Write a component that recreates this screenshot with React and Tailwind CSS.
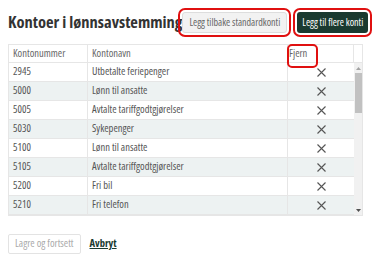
import React from 'react';

const rows = [
  { nr: '2945', navn: 'Utbetalte feriepenger' },
  { nr: '5000', navn: 'Lønn til ansatte' },
  { nr: '5005', navn: 'Avtalte tariffgodtgjørelser' },
  { nr: '5030', navn: 'Sykepenger' },
  { nr: '5100', navn: 'Lønn til ansatte' },
  { nr: '5105', navn: 'Avtalte tariffgodtgjørelser' },
  { nr: '5200', navn: 'Fri bil' },
  { nr: '5210', navn: 'Fri telefon' },
];

const XIcon = () => (
  <svg width="9" height="9" viewBox="0 0 9 9" className="text-[#555]">
    <path d="M0.5 0.5 L8.5 8.5 M8.5 0.5 L0.5 8.5" stroke="currentColor" strokeWidth="1.1" />
  </svg>
);

const App = () => {
  return (
    <div className="w-[376px] h-[256px] bg-white overflow-hidden pl-2 pr-[13px] font-['Open_Sans',sans-serif] font-stretch-[80%] text-[#555]">
      {/* Header */}
      <div className="flex items-center h-[44px]">
        <h1 className="text-[16.5px] font-bold text-[#333] whitespace-nowrap">
          Kontoer i lønnsavstemming
        </h1>
        <div className="flex ml-auto gap-[10px] font-stretch-[75%]">
          <button className="h-[21px] px-[6px] bg-[#f2f2f2] border border-[#ddd] rounded-[3px] text-[10px] text-[#666] whitespace-nowrap outline-2 outline-[#e01010] outline-offset-2">
            Legg tilbake standardkonti
          </button>
          <button className="h-[21px] px-[5px] bg-[#1a3a30] rounded-[3px] text-[10px] text-white whitespace-nowrap outline-2 outline-[#e01010] outline-offset-2">
            Legg til flere konti
          </button>
        </div>
      </div>

      {/* Table */}
      <div className="border border-[#e6e6e6] text-[10.5px]">
        <div className="flex h-[18px] border-b border-[#e6e6e6] text-[#666]">
          <div className="w-[79px] pl-[4px] flex items-center border-r border-[#e6e6e6]">Kontonummer</div>
          <div className="w-[200px] pl-[4px] flex items-center border-r border-[#e6e6e6]">Kontonavn</div>
          <div className="relative w-[66px] pl-[1px] flex items-center border-r border-[#e6e6e6]">
            Fjern
            <span className="absolute -left-[1px] top-[-1px] w-[31px] h-[24px] border-2 border-[#e01010] rounded-[5px]" />
          </div>
          <div className="flex-1" />
        </div>
        <div className="flex h-[152px] overflow-hidden">
          <div className="w-[345px]">
            {rows.map((r, i) => (
              <div
                key={r.nr}
                className={`flex h-[19px] border-b border-[#e6e6e6] ${i % 2 === 1 ? 'bg-[#edf2f2]' : 'bg-white'}`}
              >
                <div className="w-[79px] pl-[4px] flex items-center border-r border-[#e6e6e6]">{r.nr}</div>
                <div className="w-[200px] pl-[4px] flex items-center border-r border-[#e6e6e6] whitespace-nowrap">{r.navn}</div>
                <div className="w-[66px] flex items-center justify-center">
                  <XIcon />
                </div>
              </div>
            ))}
          </div>
          {/* scrollbar */}
          <div className="flex-1 bg-[#f1f1f1] flex flex-col items-center">
            <div className="h-[10px] flex items-center">
              <svg width="5" height="3" viewBox="0 0 5 3"><path d="M0 3 L2.5 0 L5 3 Z" fill="#a3a3a3" /></svg>
            </div>
            <div className="w-[7px] h-[40px] bg-[#c1c1c1]" />
            <div className="flex-1" />
            <div className="h-[10px] flex items-center">
              <svg width="5" height="3" viewBox="0 0 5 3"><path d="M0 0 L2.5 3 L5 0 Z" fill="#505050" /></svg>
            </div>
          </div>
        </div>
      </div>

      {/* Footer */}
      <div className="flex items-center gap-[9px] mt-[18px]">
        <button className="h-[20px] px-[6px] border border-[#e3e3e3] rounded-[2px] bg-white text-[10.5px] text-[#aaa] whitespace-nowrap">
          Lagre og fortsett
        </button>
        <a href="#" className="text-[10.5px] font-bold text-[#1a3a30] underline">Avbryt</a>
      </div>
    </div>
  );
};

export default App;
